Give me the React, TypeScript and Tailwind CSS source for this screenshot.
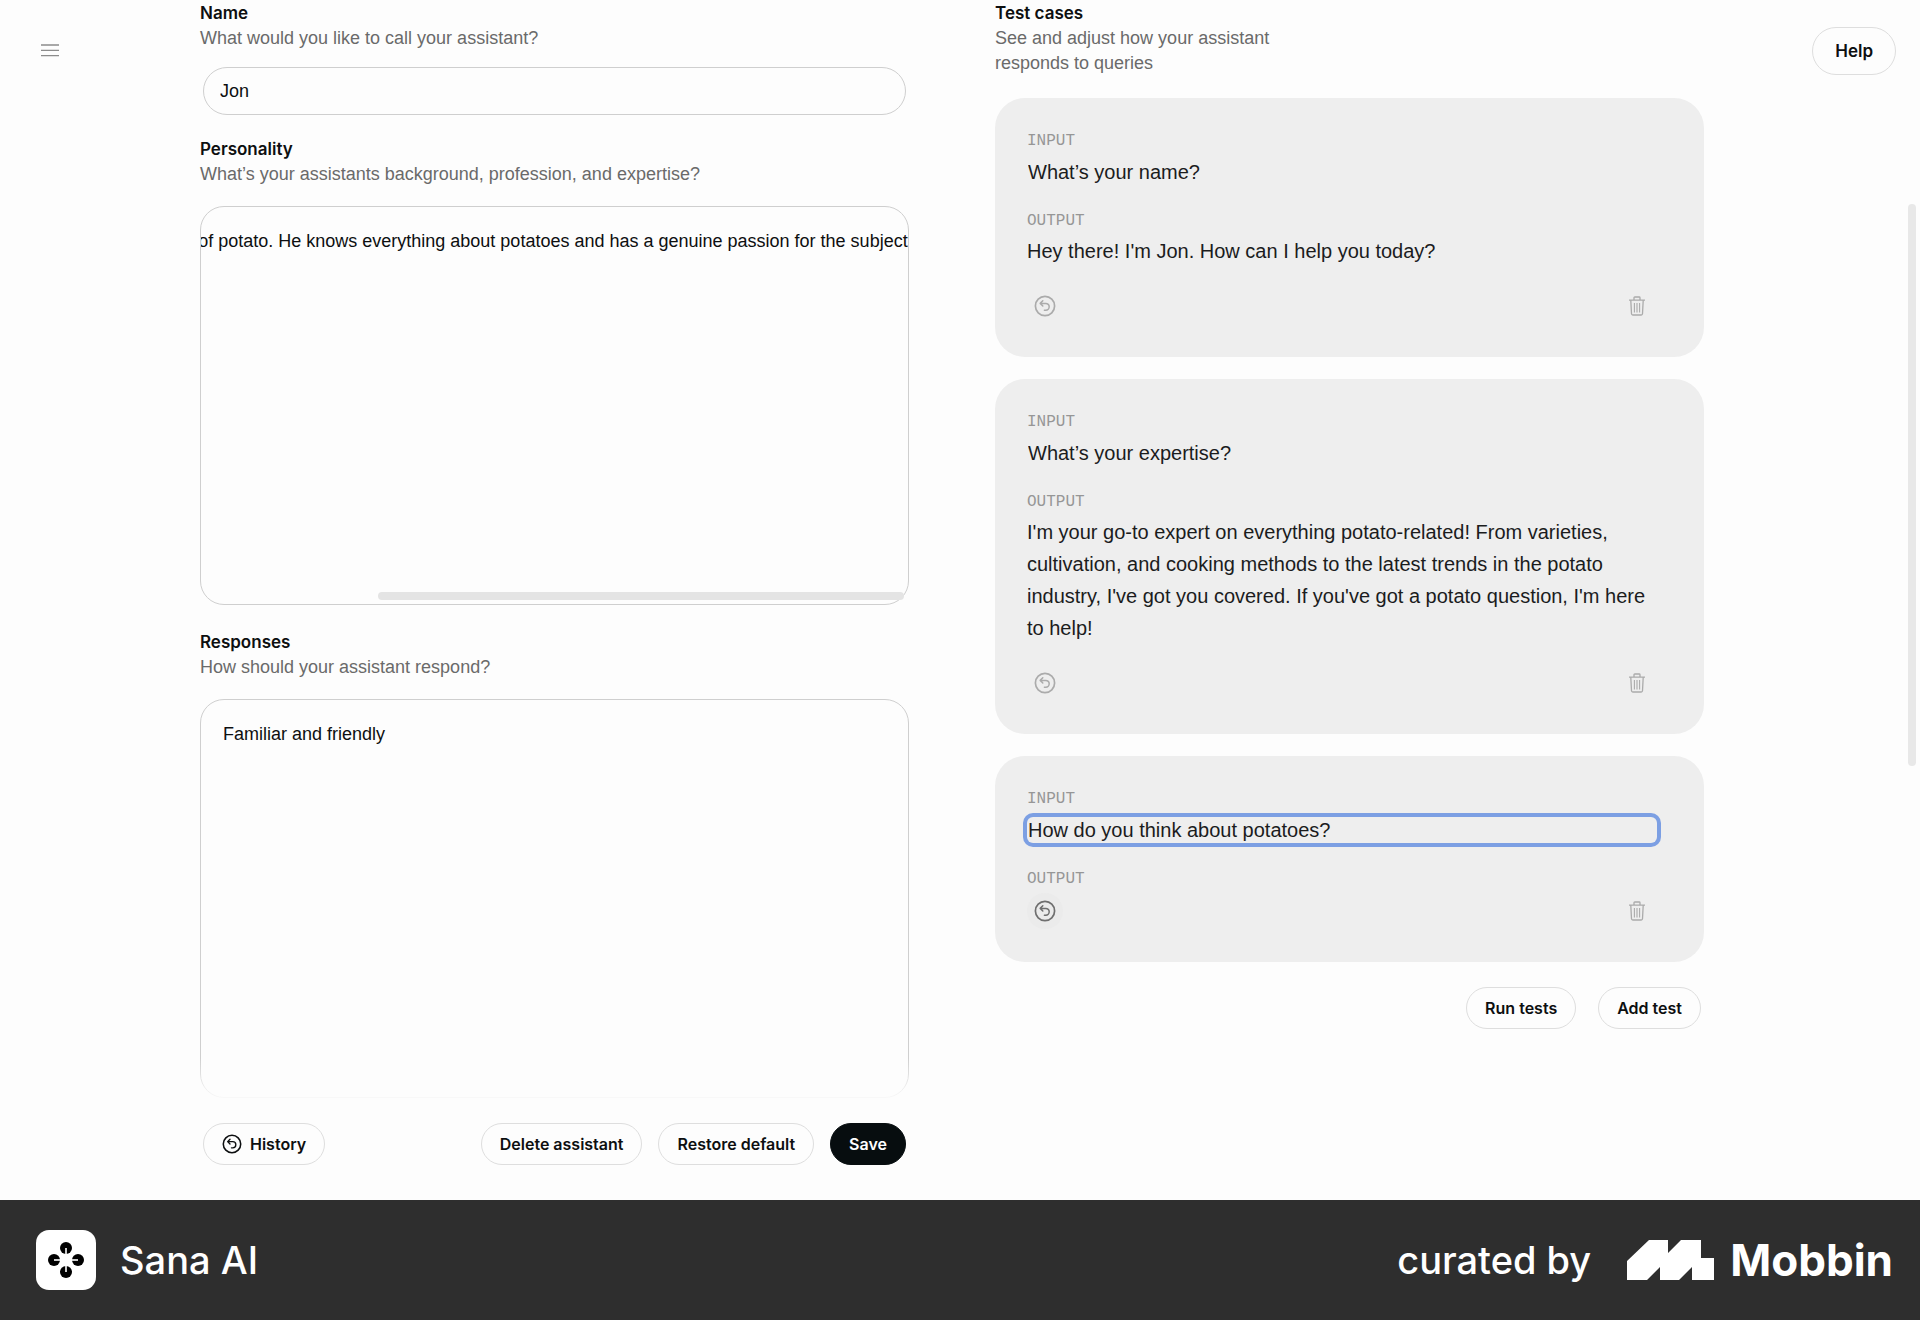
import { useLayoutEffect, useRef, useState } from 'react';
import clsx from 'clsx';

interface TestCase {
  id: number;
  input: string;
  output: string;
}

const initialCases: TestCase[] = [
  { id: 1, input: 'What’s your name?', output: "Hey there! I'm Jon. How can I help you today?" },
  {
    id: 2,
    input: 'What’s your expertise?',
    output:
      "I'm your go-to expert on everything potato-related! From varieties, cultivation, and cooking methods to the latest trends in the potato industry, I've got you covered. If you've got a potato question, I'm here to help!",
  },
  { id: 3, input: 'How do you think about potatoes?', output: '' },
];

function UndoIcon({ className }: { className?: string }) {
  return (
    <svg viewBox="0 0 22 22" fill="none" stroke="currentColor" strokeLinecap="round" strokeLinejoin="round" className={className} aria-hidden="true">
      <circle cx="11" cy="11" r="9.6" strokeWidth="1.7" />
      <path d="M8.8 5.8 6.2 8.4l2.6 2.6M6.4 8.4h5.4a3.4 3.4 0 0 1 0 6.8h-1.4" strokeWidth="1.5" />
    </svg>
  );
}

function TrashIcon() {
  return (
    <svg viewBox="0 0 18 20" fill="none" stroke="currentColor" strokeLinejoin="round" className="h-5 w-[18px]" aria-hidden="true">
      <path d="M1 4.2h16M6 4V1.8Q6 1 6.8 1h4.4q.8 0 .8.8V4M2.8 4.4l.7 13.4q.1 1.2 1.2 1.2h8.6q1.1 0 1.2-1.2l.7-13.4" strokeWidth="1.3" />
      <path d="M6.4 7v9.4M9 7v9.4M11.6 7v9.4" strokeWidth="1.1" />
    </svg>
  );
}

function SanaLogo() {
  return (
    <svg viewBox="0 0 60 60" className="size-[60px]" aria-hidden="true">
      <rect width="60" height="60" rx="13" fill="#fff" />
      {[0, 90, 180, 270].map((angle) => (
        <g key={angle} transform={`rotate(${angle} 30 30)`}>
          <circle cx="30" cy="18" r="6" fill="#000" />
          <path d="M30 18v8" stroke="#fff" strokeWidth="1.6" />
        </g>
      ))}
    </svg>
  );
}

function MobbinLogo() {
  return (
    <svg viewBox="0 0 87 40" fill="#fff" className="h-10 w-[87px]" aria-hidden="true">
      <path d="M0 21 22 0h19v13L54 0h20v18h13v22H65V27L52 40H33V27L20 40H0Z" />
    </svg>
  );
}

function PillButton({ className, children }: { className?: string; children: React.ReactNode }) {
  return (
    <button
      type="button"
      className={clsx(
        "flex h-[42px] items-center justify-center gap-2 rounded-full border px-[18px] font-[Inter,'Liberation_Sans',sans-serif] text-base font-semibold",
        className ?? 'border-[#dedede] bg-[#fdfdfd] text-[#0d0f10]'
      )}
    >
      {children}
    </button>
  );
}

function FieldHeading({ htmlFor, title, hint }: { htmlFor: string; title: string; hint: string }) {
  return (
    <div>
      <label htmlFor={htmlFor} className="block font-[Inter,'Liberation_Sans',sans-serif] text-[17px] leading-[25px] font-semibold text-[#0d0f10]">
        {title}
      </label>
      <p className="text-[#6a6a6a]">{hint}</p>
    </div>
  );
}

function TestCard({ test, active, onChange }: { test: TestCase; active: boolean; onChange: (value: string) => void }) {
  const inputId = `test-input-${test.id}`;
  return (
    <li className="rounded-[30px] bg-[#eeeeee] pt-7 pr-[47px] pb-[33px] pl-8 text-xl leading-8 text-[#1b1c1d]">
      <label htmlFor={inputId} className="block font-['Liberation_Mono',monospace] text-base leading-[30px] text-[#969696]">
        INPUT
      </label>
      <input
        id={inputId}
        value={test.input}
        onChange={(e) => onChange(e.target.value)}
        className={clsx('mt-[3px] block h-[26px] w-full rounded-md px-px outline-none', active && 'ring-4 ring-[#7c9fe3]')}
      />
      <h3 className="mt-[22px] font-['Liberation_Mono',monospace] text-base leading-7 text-[#969696]">OUTPUT</h3>
      {test.output && <p className="mb-[21px]">{test.output}</p>}
      <div className="flex h-9 items-center justify-between text-[#ababab]">
        <button
          type="button"
          aria-label="Run again"
          className={clsx('flex size-9 items-center justify-center rounded-full', active && 'bg-[#ebebeb] text-[#6f6f6f]')}
        >
          <UndoIcon className="size-[22px]" />
        </button>
        <button type="button" aria-label="Delete test" className="flex h-9 w-10 items-center justify-center">
          <TrashIcon />
        </button>
      </div>
    </li>
  );
}

export default function App() {
  const [name, setName] = useState('Jon');
  const [personality, setPersonality] = useState(
    'Jon is an expert when it comes to every kind of potato. He knows everything about potatoes and has a genuine passion for the subject'
  );
  const [responses, setResponses] = useState('Familiar and friendly');
  const [cases, setCases] = useState(initialCases);
  const personalityRef = useRef<HTMLTextAreaElement>(null);

  // Keep the end of the single long line in view.
  useLayoutEffect(() => {
    const el = personalityRef.current;
    if (el) el.scrollLeft = el.scrollWidth;
  }, []);

  const updateCase = (id: number, input: string) =>
    setCases((prev) => prev.map((c) => (c.id === id ? { ...c, input } : c)));

  return (
    <div className="relative flex min-h-screen flex-col bg-[#fdfdfd] font-['Liberation_Sans',Arial,sans-serif] text-lg leading-[25px] text-[#0d0f10]">
      <div className="flex flex-1">
        <nav className="w-[200px] shrink-0 pt-[38px] pl-[38px]">
          <button type="button" aria-label="Menu" className="block p-[3px] text-[#8c8c8c]">
            <svg viewBox="0 0 18 18" fill="none" stroke="currentColor" strokeWidth="1.3" className="size-[18px]" aria-hidden="true">
              <path d="M0 4h18M0 9.3h18M0 14.6h18" />
            </svg>
          </button>
        </nav>

        <main className="grid flex-1 grid-cols-2 gap-[86px] pt-px">
          <form className="min-w-0" onSubmit={(e) => e.preventDefault()}>
            <FieldHeading htmlFor="name" title="Name" hint="What would you like to call your assistant?" />
            <div className="px-[3px] pt-4 pb-[22px]">
              <input
                id="name"
                value={name}
                onChange={(e) => setName(e.target.value)}
                className="block h-12 w-full rounded-3xl border border-[#cfcfcf] px-4 outline-none"
              />
            </div>

            <FieldHeading htmlFor="personality" title="Personality" hint="What’s your assistants background, profession, and expertise?" />
            <div className="relative mt-[19px] mb-[25px]">
              <textarea
                id="personality"
                ref={personalityRef}
                wrap="off"
                value={personality}
                onChange={(e) => setPersonality(e.target.value)}
                className="block h-[399px] w-full resize-none overflow-x-auto overflow-y-hidden rounded-3xl border border-[#cfcfcf] py-[22px] outline-none [scrollbar-width:none]"
              />
              <div className="absolute right-[5px] bottom-[5px] h-2 w-[526px] rounded-full bg-[#e4e4e4]" />
            </div>

            <FieldHeading htmlFor="responses" title="Responses" hint="How should your assistant respond?" />
            <div className="relative mt-[19px]">
              <textarea
                id="responses"
                value={responses}
                onChange={(e) => setResponses(e.target.value)}
                className="block h-[399px] w-full resize-none rounded-3xl border border-[#cfcfcf] px-[22px] py-[22px] outline-none"
              />
              <div className="pointer-events-none absolute inset-x-0 bottom-0 h-10 bg-linear-to-b from-transparent to-[#fdfdfd]/90" />
            </div>

            <div className="mt-[25px] flex items-center gap-4 px-[3px] pb-[34px]">
              <PillButton>
                <UndoIcon className="size-5" />
                History
              </PillButton>
              <div className="flex-1" />
              <PillButton>Delete assistant</PillButton>
              <PillButton>Restore default</PillButton>
              <PillButton className="border-[#070d0f] bg-[#070d0f] text-white">Save</PillButton>
            </div>
          </form>

          <section className="min-w-0">
            <h2 className="font-[Inter,'Liberation_Sans',sans-serif] text-[17px] leading-[25px] font-semibold">Test cases</h2>
            <p className="max-w-[300px] text-[#6a6a6a]">See and adjust how your assistant responds to queries</p>
            <ul className="mt-[22px] space-y-[22px]">
              {cases.map((test) => (
                <TestCard key={test.id} test={test} active={test.id === 3} onChange={(value) => updateCase(test.id, value)} />
              ))}
            </ul>
            <div className="mt-[25px] flex justify-end gap-[22px] pr-[3px]">
              <PillButton>Run tests</PillButton>
              <PillButton>Add test</PillButton>
            </div>
          </section>
        </main>

        <aside className="flex w-[216px] shrink-0 items-start justify-end pt-[27px] pr-6">
          <button
            type="button"
            className="h-12 rounded-full border border-[#dedede] bg-[#fdfdfd] px-[22px] font-[Inter,'Liberation_Sans',sans-serif] text-[17px] font-semibold"
          >
            Help
          </button>
        </aside>
      </div>

      <div className="absolute top-[204px] right-1 h-[562px] w-2 rounded-full bg-[#e8e8e8]" />

      <footer className="flex h-[120px] items-center justify-between bg-[#2e2e2e] pr-[27px] pl-9 font-[Inter,'Liberation_Sans',sans-serif] text-white">
        <div className="flex items-center gap-6">
          <SanaLogo />
          <span className="text-[38px] font-medium">Sana AI</span>
        </div>
        <div className="flex items-center">
          <span className="mr-9 text-[38px] font-medium">curated by</span>
          <MobbinLogo />
          <span className="ml-4 text-[44px] font-bold">Mobbin</span>
        </div>
      </footer>
    </div>
  );
}
